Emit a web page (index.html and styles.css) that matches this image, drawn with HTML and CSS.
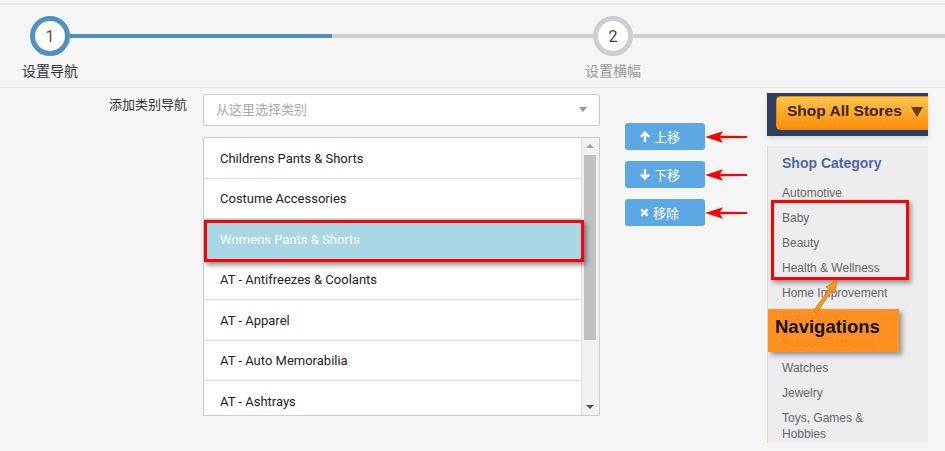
FILE: index.html
```html
<!DOCTYPE html>
<html>
<head>
  <title>设置导航</title>
  <meta charset="UTF-8">
  <link rel="stylesheet" href="styles.css">
</head>
<body>
  <div class="steps">
    <div class="step done">
      <span class="step-num">1</span>
      <span class="step-label">设置导航</span>
    </div>
    <div class="connector first"></div>
    <div class="step">
      <span class="step-num">2</span>
      <span class="step-label">设置横幅</span>
    </div>
    <div class="connector last"></div>
  </div>

  <div class="content">
    <div class="form-row">
      <label class="form-label">添加类别导航</label>
      <div class="fields">
        <div class="select">从这里选择类别<span class="caret"></span></div>

        <div class="listbox">
          <div class="list-items">
            <div class="list-item">Childrens Pants &amp; Shorts</div>
            <div class="list-item">Costume Accessories</div>
            <div class="list-item selected">Womens Pants &amp; Shorts</div>
            <div class="list-item">AT - Antifreezes &amp; Coolants</div>
            <div class="list-item">AT - Apparel</div>
            <div class="list-item">AT - Auto Memorabilia</div>
            <div class="list-item">AT - Ashtrays</div>
          </div>
          <div class="scrollbar">
            <span class="scroll-up"></span>
            <span class="scroll-thumb"></span>
            <span class="scroll-down"></span>
          </div>
          <!-- 标注框 -->
          <div class="callout"></div>
        </div>
      </div>
    </div>

    <div class="actions">
      <div class="action-row">
        <button class="btn">
          <svg class="icon" viewBox="0 0 10 11" width="10" height="11"><path d="M5 0 L10 5 L8.4 6.6 L6.2 4.4 V11 H3.8 V4.4 L1.6 6.6 L0 5 Z" fill="#fff"/></svg>
          上移
        </button>
        <svg class="red-arrow" viewBox="0 0 42 14" width="42" height="14"><path d="M0 7 L18 1.2 L15 5.8 L42 5.9 L42 8.1 L15 8.2 L18 12.8 Z" fill="#f00"/></svg>
      </div>
      <div class="action-row">
        <button class="btn">
          <svg class="icon" viewBox="0 0 10 11" width="10" height="11"><path d="M5 11 L10 6 L8.4 4.4 L6.2 6.6 V0 H3.8 V6.6 L1.6 4.4 L0 6 Z" fill="#fff"/></svg>
          下移
        </button>
        <svg class="red-arrow" viewBox="0 0 42 14" width="42" height="14"><path d="M0 7 L18 1.2 L15 5.8 L42 5.9 L42 8.1 L15 8.2 L18 12.8 Z" fill="#f00"/></svg>
      </div>
      <div class="action-row">
        <button class="btn">
          <svg class="icon" viewBox="0 0 10 10" width="9" height="9"><path d="M1.5 1.5 L8.5 8.5 M8.5 1.5 L1.5 8.5" stroke="#fff" stroke-width="2.8"/></svg>
          移除
        </button>
        <svg class="red-arrow" viewBox="0 0 42 14" width="42" height="14"><path d="M0 7 L18 1.2 L15 5.8 L42 5.9 L42 8.1 L15 8.2 L18 12.8 Z" fill="#f00"/></svg>
      </div>
    </div>

    <!-- 预览图 -->
    <div class="store">
      <div class="store-bar">
        <div class="store-btn">Shop All Stores<span class="store-caret"></span></div>
      </div>
      <div class="store-panel">
        <div class="store-title">Shop Category</div>
        <div class="store-item">Automotive</div>
        <div class="store-item">Baby</div>
        <div class="store-item">Beauty</div>
        <div class="store-item">Health &amp; Wellness</div>
        <div class="store-item">Home Improvement</div>
        <div class="store-item">Home Living</div>
        <div class="store-item">School Textbooks</div>
        <div class="store-item">Watches</div>
        <div class="store-item">Jewelry</div>
        <div class="store-item wrap">Toys, Games &amp; Hobbies</div>

        <div class="red-frame"></div>
        <div class="nav-box">Navigations</div>
        <svg class="nav-arrow" viewBox="0 0 30 40" width="30" height="40">
          <path d="M27 4 L24.8 17.2 L21.8 15.1 L6.4 37 L3.6 35 L19 13.1 L16 11 Z" fill="#f7941d" stroke="#d9770f" stroke-width="0.8"/>
        </svg>
      </div>
    </div>
  </div>
</body>
</html>
```

FILE: styles.css
```css
body {
  margin: 0;
  padding-top: 3px;
  background: #f5f5f5;
  font-family: Roboto, "Noto Sans CJK SC", sans-serif;
  overflow: hidden;
}

/* 步骤条 */
.steps {
  display: flex;
  align-items: flex-start;
  height: 85px;
  box-sizing: border-box;
  padding-top: 11px;
  border-top: 2px solid #e8e8e8;
  border-bottom: 1px solid #e8e8e8;
}

.step {
  position: relative;
  z-index: 1;
  flex: 0 0 100px;
  display: flex;
  flex-direction: column;
  align-items: center;
}

.step-num {
  width: 40px;
  height: 40px;
  box-sizing: border-box;
  border: 5px solid #ccced2;
  border-radius: 50%;
  background: #fff;
  display: flex;
  align-items: center;
  justify-content: center;
  font-size: 16px;
  color: #444;
}

.step.done .step-num {
  border-color: #4f91c3;
  color: #6b4a4a;
}

.step-label {
  margin-top: 5px;
  font-size: 14px;
  line-height: 20px;
  color: #999;
}

.step.done .step-label {
  color: #333;
}

.connector {
  height: 4px;
  margin-top: 18px;
  background: #ccced2;
}

.connector.first {
  flex: 0 0 523px;
  margin-left: -30px;
  margin-right: -30px;
  background: linear-gradient(to right, #4f91c3 262px, #ccced2 262px);
}

.connector.last {
  flex: 1;
  margin-left: -30px;
}

/* 主体 */
.content {
  display: flex;
  align-items: flex-start;
  padding-top: 6px;
}

.form-row {
  display: flex;
  align-items: flex-start;
}

.form-label {
  width: 187px;
  text-align: right;
  font-size: 13px;
  line-height: 22px;
  color: #333;
}

.fields {
  margin-left: 16px;
  width: 397px;
}

.select {
  position: relative;
  height: 32px;
  box-sizing: border-box;
  border: 1px solid #ccc;
  border-radius: 2px;
  background: #fff;
  padding: 0 12px;
  line-height: 30px;
  font-size: 13px;
  color: #aaa;
}

.caret {
  position: absolute;
  right: 12px;
  top: 12px;
  border-top: 5px solid #999;
  border-left: 4px solid transparent;
  border-right: 4px solid transparent;
}

.listbox {
  position: relative;
  display: flex;
  margin-top: 11px;
  height: 279px;
  box-sizing: border-box;
  border: 1px solid #ccc;
  background: #fff;
}

.list-items {
  flex: 1;
  overflow: hidden;
}

.list-item {
  height: 40.5px;
  box-sizing: border-box;
  display: flex;
  align-items: center;
  padding: 1px 0 0 16px;
  border-bottom: 1px solid #ddd;
  font-size: 13px;
  color: #222;
}

.list-item.selected {
  background: #a9d6e5;
  color: #fff;
}

.scrollbar {
  position: relative;
  width: 17px;
  border-left: 1px solid #ddd;
  background: #f1f1f1;
}

.scroll-thumb {
  position: absolute;
  top: 17px;
  left: 2px;
  width: 12px;
  height: 185px;
  background: #c1c1c1;
}

.scroll-up,
.scroll-down {
  position: absolute;
  left: 4px;
  border-left: 4px solid transparent;
  border-right: 4px solid transparent;
}

.scroll-up {
  top: 6px;
  border-bottom: 4px solid #a3a3a3;
}

.scroll-down {
  bottom: 6px;
  border-top: 4px solid #505050;
}

.callout {
  position: absolute;
  top: 82px;
  left: 0;
  width: 380px;
  height: 42px;
  box-sizing: border-box;
  border: 3px solid #f00;
  box-shadow: 2px 3px 5px rgba(0,0,0,0.45);
}

/* 操作按钮 */
.actions {
  display: flex;
  flex-direction: column;
  gap: 11px;
  margin-left: 25px;
  padding-top: 29px;
}

.action-row {
  display: flex;
  align-items: center;
}

.btn {
  width: 80px;
  height: 27px;
  display: flex;
  align-items: center;
  gap: 4px;
  padding: 0 0 0 15px;
  border: none;
  border-radius: 3px;
  background: #5ca8e4;
  color: #fff;
  font-family: Roboto, "Noto Sans CJK SC", sans-serif;
  font-size: 13px;
}

.icon {
  display: block;
}

.red-arrow {
  display: block;
}

/* 商店预览 */
.store {
  width: 161px;
  margin-left: 20px;
  margin-top: -1px;
  font-family: "Liberation Sans", Arial, sans-serif;
}

.store-bar {
  height: 43px;
  box-sizing: border-box;
  padding: 3px 0 0 9px;
  background: #2f3e5b;
  overflow: hidden;
  box-shadow: 0 3px 5px rgba(0,0,0,0.12);
}

.store-btn {
  width: 170px;
  height: 34px;
  box-sizing: border-box;
  display: flex;
  align-items: center;
  padding: 0 0 5px 10px;
  border: 1px solid #e98a0c;
  border-radius: 4px 0 0 4px;
  background: linear-gradient(#ffc54d, #ffa526 55%, #ff8d0a);
  color: #3a2506;
  font-size: 15.5px;
  font-weight: bold;
}

.store-caret {
  margin-left: 9px;
  margin-top: 3px;
  border-top: 10px solid #5e4014;
  border-left: 6px solid transparent;
  border-right: 6px solid transparent;
}

.store-panel {
  position: relative;
  margin-top: 10px;
  height: 297px;
  box-sizing: border-box;
  padding: 8px 0 0 14px;
  border-left: 1px solid #e2ddcc;
  background: #edecee;
  overflow: hidden;
}

.store-title {
  font-size: 14px;
  font-weight: bold;
  line-height: 18px;
  color: #4a6aa1;
  margin-bottom: 8.5px;
}

.store-item {
  padding: 4.5px 0;
  font-size: 12px;
  line-height: 16px;
  color: #666;
}

.store-item.wrap {
  width: 100px;
}

.red-frame {
  position: absolute;
  left: 3px;
  top: 54px;
  width: 138px;
  height: 80px;
  box-sizing: border-box;
  border: 3px solid #f00;
  box-shadow: 2px 3px 5px rgba(0,0,0,0.4);
}

.nav-box {
  position: absolute;
  left: 0;
  top: 163px;
  width: 131px;
  height: 43px;
  box-sizing: border-box;
  padding-left: 7px;
  line-height: 36px;
  background: rgba(255,138,20,0.94);
  box-shadow: 3px 3px 5px rgba(0,0,0,0.4);
  color: #111;
  font-size: 18.5px;
  font-weight: bold;
}

.nav-arrow {
  position: absolute;
  left: 42px;
  top: 130px;
}
```
